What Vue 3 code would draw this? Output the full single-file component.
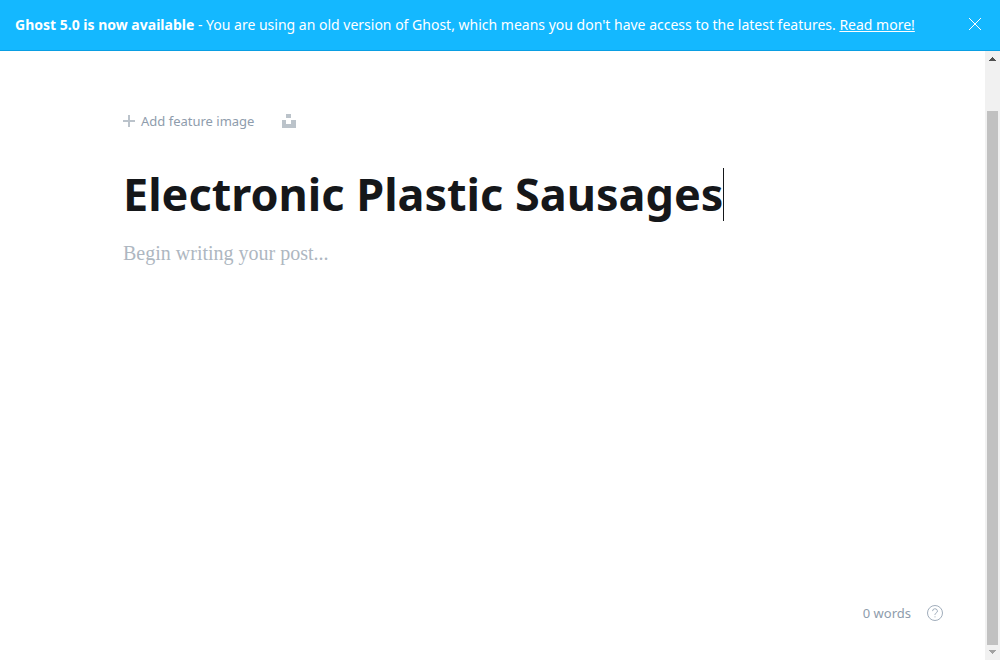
<script setup>
import { ref } from 'vue'

const title = ref('Electronic Plastic Sausages')
const body = ref('')
const showBanner = ref(true)
</script>

<template>
  <div class="app">
    <header v-if="showBanner" class="banner">
      <p class="notice"><strong>Ghost 5.0 is now available</strong> - You are using an old version of Ghost, which means you don't have access to the latest features. <a href="#">Read more!</a></p>
      <button class="close" type="button" aria-label="Close" @click="showBanner = false">
        <svg width="12" height="12" viewBox="0 0 12 12" fill="none" stroke="currentColor"><path d="M0 0l12 12M12 0L0 12" /></svg>
      </button>
    </header>
    <div class="workspace">
      <main class="editor">
        <div class="tools">
          <button class="tool" type="button">
            <svg width="12" height="12" viewBox="0 0 12 12" fill="#aab4be"><path d="M5 0h2v5h5v2H7v5H5V7H0V5h5z" fill-opacity=".8" /></svg>
            <span>Add feature image</span>
          </button>
          <button class="tool" type="button" aria-label="Unsplash">
            <svg width="14" height="14" viewBox="0 0 14 14" fill="#bbc3ca"><path d="M4 0h5v4H4zM0 6h4v4h5V6h5v8H0z" /></svg>
          </button>
        </div>
        <div class="title-row">
          <input v-model="title" class="title" type="text" aria-label="Post title" />
          <span class="caret"></span>
        </div>
        <textarea v-model="body" class="body" aria-label="Post content" placeholder="Begin writing your post..."></textarea>
        <footer class="status">
          <span>0 words</span>
          <a class="help" href="#" aria-label="Help">
            <svg width="16" height="16" viewBox="0 0 16 16" fill="none" stroke="currentColor"><circle cx="8" cy="8" r="7.5" /><path d="M5.6 6.1a2.4 2.3 0 1 1 3.5 2C8.3 8.500 8 8.800 8 10" /><circle cx="8" cy="11.800" r=".6" fill="currentColor" stroke="none" /></svg>
          </a>
        </footer>
      </main>
      <div class="scrollbar" aria-hidden="true">
        <svg width="15" height="15" viewBox="0 0 15 15" fill="#505050" shape-rendering="crispEdges"><path d="M7 6h1v1h1v1h1v1h1v1H4V9h1V8h1V7h1z" /></svg>
        <div class="track"><div class="thumb"></div></div>
        <svg width="15" height="15" viewBox="0 0 15 15" fill="#a3a3a3" shape-rendering="crispEdges"><path d="M4 5h7v1h-1v1H9v1H8v1H7V8H6V7H5V6H4z" /></svg>
      </div>
    </div>
  </div>
</template>

<style>
body {
  margin: 0;
  background: #fff;
}
</style>

<style scoped>
.app {
  display: flex;
  flex-direction: column;
  height: 100vh;
  color: #15171a;
  font-family: "Noto Sans", sans-serif;
}
.banner {
  display: flex;
  align-items: center;
  justify-content: space-between;
  box-sizing: border-box;
  min-height: 51px;
  padding: 0 18px 0 15px;
  border-bottom: 1px solid #0a9fe3;
  background: #14b8ff;
  color: #fff;
}
.notice {
  margin: 0;
  font-size: 14px;
  line-height: 20px;
}
.notice a {
  color: inherit;
  text-decoration: underline;
}
button {
  padding: 0;
  border: 0;
  background: none;
  color: inherit;
  font: inherit;
  cursor: pointer;
}
.close,
.close svg,
.tool svg {
  display: block;
}
.close {
  padding: 0 1px 2px;
}
.workspace {
  display: flex;
  flex: 1;
  min-height: 0;
}
.editor {
  display: flex;
  flex: 1;
  flex-direction: column;
  min-width: 0;
  padding: 60px 42px 37px 123px;
}
.tools {
  display: flex;
  align-items: center;
  gap: 28px;
  height: 20px;
}
.tool {
  display: flex;
  align-items: center;
  gap: 6px;
  color: #8e9cac;
  font-size: 13px;
  line-height: 20px;
}
.title-row {
  display: flex;
  align-items: center;
  height: 60px;
  margin-top: 33px;
}
.title {
  field-sizing: content;
  min-width: 0;
  padding: 0;
  border: 0;
  outline: 0;
  background: none;
  color: #15171a;
  font-family: "Noto Sans", sans-serif;
  font-size: 45px;
  font-weight: 700;
  line-height: 60px;
}
.caret {
  flex: none;
  width: 1px;
  height: 53px;
  background: #15171a;
}
.body {
  flex: 1;
  margin-top: 13px;
  padding: 0;
  border: 0;
  outline: 0;
  resize: none;
  background: none;
  color: #15171a;
  font-family: "Liberation Serif", serif;
  font-size: 20px;
  line-height: 32px;
}
.body::placeholder {
  color: #aeb7c1;
  opacity: 1;
}
.status {
  display: flex;
  align-items: center;
  justify-content: flex-end;
  gap: 16px;
  color: #8e9cac;
  font-size: 13px;
  line-height: 20px;
}
.help {
  color: #a0adbb;
}
.help svg {
  display: block;
}
.scrollbar {
  display: flex;
  flex: none;
  flex-direction: column;
  width: 15px;
  background: #f1f1f1;
}
.track {
  flex: 1;
  padding: 45px 2px 0;
}
.track {
  display: flex;
}
.thumb {
  flex: 1;
  background: #c1c1c1;
}
</style>
